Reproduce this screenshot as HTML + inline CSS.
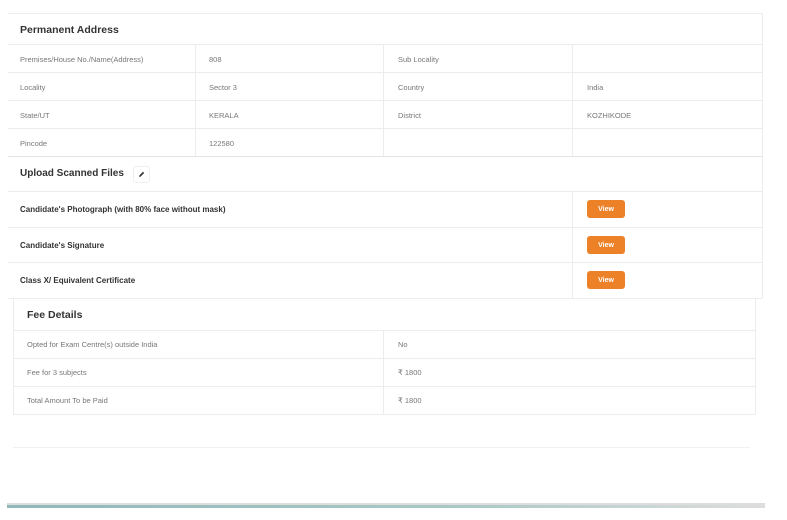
<!DOCTYPE html>
<html><head><style>
body{margin:0;width:787px;height:520px;background:#fff;position:relative;overflow:hidden;font-family:"Liberation Sans",sans-serif;}
.a{position:absolute;}
.h{position:absolute;background:#ececec;height:1px;}
.v{position:absolute;background:#ececec;width:1px;}
.t{position:absolute;font-size:7.5px;color:#777;white-space:nowrap;}
.b{position:absolute;font-size:8px;color:#333;font-weight:bold;white-space:nowrap;}
.ttl{position:absolute;font-size:10.5px;font-weight:bold;color:#333;white-space:nowrap;}
.btn{position:absolute;left:587px;width:38px;height:18px;background:#ec8128;border-radius:3px;color:#fff;font-size:7px;font-weight:bold;display:flex;align-items:center;justify-content:center;}
</style></head><body>
<div class="h" style="left:8px;top:13px;width:754px"></div>
<div class="v" style="left:762px;top:13px;height:285px"></div>
<div class="ttl" style="left:20px;top:24px">Permanent Address</div>
<div class="h" style="left:8px;top:44px;width:754px"></div>
<div class="h" style="left:8px;top:72px;width:754px"></div>
<div class="h" style="left:8px;top:100px;width:754px"></div>
<div class="h" style="left:8px;top:128px;width:754px"></div>
<div class="h" style="left:8px;top:156px;width:754px;background:#e4e4e4"></div>
<div class="v" style="left:195px;top:44px;height:112px"></div>
<div class="v" style="left:383px;top:44px;height:112px"></div>
<div class="v" style="left:572px;top:44px;height:112px"></div>
<div class="t" style="left:20px;top:55px">Premises/House No./Name(Address)</div>
<div class="t" style="left:209px;top:55px">808</div>
<div class="t" style="left:398px;top:55px">Sub Locality</div>
<div class="t" style="left:20px;top:83px">Locality</div>
<div class="t" style="left:209px;top:83px">Sector 3</div>
<div class="t" style="left:398px;top:83px">Country</div>
<div class="t" style="left:587px;top:83px">India</div>
<div class="t" style="left:20px;top:111px">State/UT</div>
<div class="t" style="left:209px;top:111px">KERALA</div>
<div class="t" style="left:398px;top:111px">District</div>
<div class="t" style="left:587px;top:111px">KOZHIKODE</div>
<div class="t" style="left:20px;top:139px">Pincode</div>
<div class="t" style="left:209px;top:139px">122580</div>
<div class="ttl" style="left:20px;top:168px;font-size:10px">Upload Scanned Files</div>
<div class="a" style="left:133px;top:166px;width:15px;height:15px;border:1px solid #eee;border-radius:3px;background:#fff"><svg width="15" height="15" viewBox="0 0 15 15"><path d="M5 10 L5.5 8.3 L9 4.8 L10.2 6 L6.7 9.5 Z" fill="#333"/></svg></div>
<div class="h" style="left:8px;top:191px;width:754px"></div>
<div class="h" style="left:8px;top:227px;width:754px"></div>
<div class="h" style="left:8px;top:262px;width:754px"></div>
<div class="h" style="left:8px;top:298px;width:754px"></div>
<div class="v" style="left:572px;top:191px;height:107px"></div>
<div class="b" style="left:20px;top:205px">Candidate's Photograph (with 80% face without mask)</div>
<div class="b" style="left:20px;top:241px">Candidate's Signature</div>
<div class="b" style="left:20px;top:276px">Class X/ Equivalent Certificate</div>
<div class="btn" style="top:200px">View</div>
<div class="btn" style="top:236px">View</div>
<div class="btn" style="top:271px">View</div>
<div class="v" style="left:13px;top:298px;height:116px"></div>
<div class="v" style="left:755px;top:298px;height:116px"></div>
<div class="ttl" style="left:27px;top:309px">Fee Details</div>
<div class="h" style="left:13px;top:330px;width:742px"></div>
<div class="h" style="left:13px;top:358px;width:742px"></div>
<div class="h" style="left:13px;top:386px;width:742px"></div>
<div class="h" style="left:13px;top:414px;width:742px"></div>
<div class="v" style="left:383px;top:330px;height:84px"></div>
<div class="t" style="left:27px;top:340px">Opted for Exam Centre(s) outside India</div>
<div class="t" style="left:398px;top:340px">No</div>
<div class="t" style="left:27px;top:368px">Fee for 3 subjects</div>
<div class="t" style="left:398px;top:368px">₹ 1800</div>
<div class="t" style="left:27px;top:396px">Total Amount To be Paid</div>
<div class="t" style="left:398px;top:396px">₹ 1800</div>
<div class="h" style="left:13px;top:447px;width:737px;background:#f0f0f0"></div>
<div class="a" style="left:7px;top:503px;width:758px;height:2px;background:#ddd"></div>
<div class="a" style="left:7px;top:505px;width:758px;height:3px;background:linear-gradient(90deg,#8fb9b9,#a9c9c6 60%,#ddd)"></div>
</body></html>
